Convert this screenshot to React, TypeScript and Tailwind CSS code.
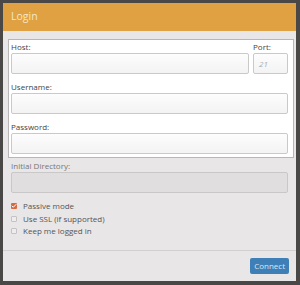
import { Check } from 'lucide-react';

const font = { fontFamily: '"Open Sans", "Liberation Sans", sans-serif' };

function Field({ label, className = '' }: { label: string; className?: string }) {
  return (
    <div className={className}>
      <div className="h-[13px] text-[8px] leading-[13px] text-[#444]">{label}</div>
      <div className="h-[21px] rounded-[2px] border border-[#c9c9c9] bg-gradient-to-b from-[#fdfdfd] to-[#f3f3f3]" />
    </div>
  );
}

function Option({ label, checked }: { label: string; checked?: boolean }) {
  return (
    <div className="flex h-[12.5px] items-center gap-[6px]">
      <span
        className={
          checked
            ? 'flex h-[6px] w-[6px] items-center justify-center rounded-[1px] bg-[#d86a3f]'
            : 'h-[6px] w-[6px] rounded-[1px] border border-[#c4c2c2] bg-[#eeecec]'
        }
      >
        {checked && <Check size={6} strokeWidth={4} className="text-white" />}
      </span>
      <span className="text-[8px] text-[#555]">{label}</span>
    </div>
  );
}

export default function App() {
  return (
    <div className="h-[285px] w-[300px] bg-[#4a4747] pl-[3px] pt-[3px]" style={font}>
      <div className="flex h-[278px] w-[293px] flex-col bg-[#e8e6e6]">
        <div className="flex h-[28px] items-center bg-[#dfa142] pl-[8px] text-[10.5px] text-[#f6e6c8]">Login</div>

        <div className="mt-[8px] ml-[5px] mr-[2px] border border-[#b8b6b6] bg-white pb-[3px] pl-[2px] pr-[5px]">
          <div className="flex gap-[4px]">
            <Field label="Host:" className="flex-1" />
            <div className="w-[35px]">
              <div className="h-[13px] text-[8px] leading-[13px] text-[#444]">Port:</div>
              <div className="flex h-[21px] items-center rounded-[2px] border border-[#c9c9c9] bg-gradient-to-b from-[#fdfdfd] to-[#f3f3f3] pl-[5px] text-[8px] italic text-[#aaa]">
                21
              </div>
            </div>
          </div>
          <Field label="Username:" className="mt-[6px]" />
          <Field label="Password:" className="mt-[6px]" />
        </div>

        <div className="ml-[8px] mr-[8px] mt-[1px]">
          <div className="h-[13px] text-[8px] leading-[13px] text-[#777]">Initial Directory:</div>
          <div className="h-[21px] rounded-[2px] border border-[#c9c7c7] bg-[#e0dede]" />
        </div>

        <div className="mt-[7px] ml-[8px] flex flex-col">
          <Option label="Passive mode" checked />
          <Option label="Use SSL (if supported)" />
          <Option label="Keep me logged in" />
        </div>

        <div className="mt-auto flex h-[31px] items-center justify-end border-t border-[#d2d0d0] pr-[7px]">
          <button className="h-[16px] rounded-[2px] bg-[#3e7fb7] px-[4px] text-[8px] text-[#dbe7f2]">Connect</button>
        </div>
      </div>
    </div>
  );
}
